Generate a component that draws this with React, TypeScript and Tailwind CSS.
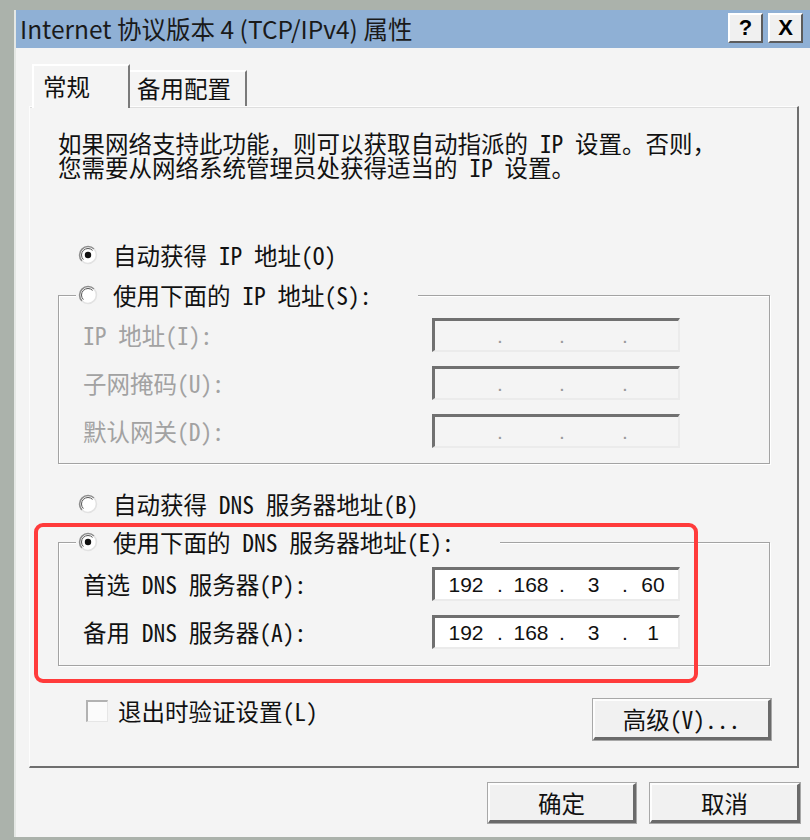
import React from 'react';

const SONG = "font-['Noto_Sans_Mono_CJK_SC','Noto_Sans_CJK_SC',sans-serif]";

function Radio({ checked = false }: { checked?: boolean }) {
  return (
    <svg width="20" height="20" viewBox="0 0 20 20" className="shrink-0">
      <circle cx="10" cy="10" r="8.5" fill="#fff" />
      <path d="M3.99 16.01A8.5 8.5 0 0 1 16.01 3.99" fill="none" stroke="#8c8c8c" strokeWidth="1.6" />
      <path d="M16.01 3.99A8.5 8.5 0 0 1 3.99 16.01" fill="none" stroke="#e2e2e2" strokeWidth="1.6" />
      <path d="M5.4 14.6A6.5 6.5 0 0 1 14.6 5.4" fill="none" stroke="#555" strokeWidth="1" />
      {checked && <circle cx="10" cy="10" r="3.2" fill="#111" />}
    </svg>
  );
}

function RadioRow({ checked, children }: { checked?: boolean; children: React.ReactNode }) {
  return (
    <div className="flex h-[24px] items-center gap-[15px]">
      <Radio checked={checked} />
      <span className={`${SONG} whitespace-pre text-[23.5px] leading-[24px] text-[#111]`}>{children}</span>
    </div>
  );
}

function IpBox({ parts, disabled }: { parts?: string[]; disabled?: boolean }) {
  const p = parts ?? ['', '', '', ''];
  const dot = disabled ? 'text-[#9a9a9a]' : 'text-[#111]';
  return (
    <div
      className={`flex h-[34px] w-[248px] items-center border-t-[3px] border-l-[3px] border-r-2 border-b-2 border-t-[#707070] border-l-[#707070] border-r-[#ebebeb] border-b-[#ebebeb] font-['Liberation_Sans',sans-serif] text-[21px] text-[#111] ${
        disabled ? 'bg-[#f4f4f4]' : 'bg-white'
      }`}
    >
      <span className="w-[62px] text-center">{p[0]}</span>
      <span className={`w-[6px] text-center ${dot}`}>.</span>
      <span className="w-[56px] text-center">{p[1]}</span>
      <span className={`w-[6px] text-center ${dot}`}>.</span>
      <span className="w-[57px] text-center">{p[2]}</span>
      <span className={`w-[6px] text-center ${dot}`}>.</span>
      <span className="flex-1 text-center">{p[3]}</span>
    </div>
  );
}

function FieldRow({ label, disabled, parts }: { label: string; disabled?: boolean; parts?: string[] }) {
  return (
    <div className="flex h-[34px] items-center">
      <span
        className={`ml-[24px] w-[349px] whitespace-pre ${SONG} text-[23.5px] leading-[24px] ${
          disabled ? 'text-[#a2a2a2]' : 'text-[#111]'
        }`}
      >
        {label}
      </span>
      <IpBox disabled={disabled} parts={parts} />
    </div>
  );
}

function Group({ legend, checked, children }: { legend: string; checked?: boolean; children: React.ReactNode }) {
  return (
    <fieldset className="ml-[28px] w-[712px] border border-[#a3a3a3] shadow-[inset_1px_1px_0_#fff,1px_1px_0_#fff]">
      <legend className="ml-[17px] bg-[#f4f4f4] pl-[2px] pr-[46px]">
        <RadioRow checked={checked}>{legend}</RadioRow>
      </legend>
      {children}
    </fieldset>
  );
}

function CapButton({ children }: { children: React.ReactNode }) {
  return (
    <div className="flex h-[30px] w-[35px] items-center justify-center border-t-2 border-l-2 border-r-2 border-b-2 border-t-white border-l-white border-r-[#5c5c5c] border-b-[#5c5c5c] bg-[#f0f0f0] font-['Liberation_Sans',sans-serif] text-[22px] font-bold leading-none text-black">
      {children}
    </div>
  );
}

function PushButton({ className, children }: { className: string; children: React.ReactNode }) {
  return (
    <div
      className={`flex items-center justify-center border-t-2 border-l-2 border-r-[3px] border-b-[3px] border-t-[#fdfdfd] border-l-[#fdfdfd] border-r-[#6a6a6a] border-b-[#6a6a6a] bg-[#f1f1f1] shadow-[0_0_0_1px_#a8a8a8] ${SONG} text-[23.5px] leading-[24px] text-[#111] ${className}`}
    >
      {children}
    </div>
  );
}

export default function App() {
  return (
    <div className="relative flex h-[840px] w-[810px] flex-col overflow-hidden bg-[#abb2ab]">
      <div className="h-[10px] shrink-0" />
      <div className="flex h-[827px] shrink-0">
        <div className="w-[14px] shrink-0" />
        <div className="w-[2px] shrink-0 bg-[#e4e7e4]" />
        <div className="flex flex-1 flex-col">
          {/* title bar */}
          <div className="flex h-[38px] shrink-0 items-start justify-between bg-[#8fb0d5] pt-[3px] pr-[7px]">
            <span className="pl-[4px] pt-[2px] font-['Noto_Sans_CJK_SC',sans-serif] text-[24.5px] leading-[28px] text-[#1a1a1a]">
              Internet 协议版本 4 (TCP/IPv4) 属性
            </span>
            <div className="flex gap-[5px]">
              <CapButton>?</CapButton>
              <CapButton>X</CapButton>
            </div>
          </div>

          {/* body */}
          <div className="flex flex-1 flex-col bg-[#f4f4f4]">
            <div className="flex h-[58px] shrink-0 items-end pl-[16px]">
              <div
                className={`relative z-10 -mb-[2px] flex h-[44px] w-[98px] items-center border-t-2 border-l-2 border-r-2 border-t-white border-l-white border-r-[#7a7a7a] bg-[#f4f4f4] pl-[9px] ${SONG} text-[23.5px] text-[#111]`}
              >
                常规
              </div>
              <div
                className={`flex h-[36px] w-[117px] items-center border-t-2 border-r-2 border-t-white border-r-[#7a7a7a] pl-[7px] ${SONG} text-[23.5px] text-[#111]`}
              >
                备用配置
              </div>
            </div>

            {/* tab panel */}
            <div className="ml-[13px] flex h-[662px] w-[770px] shrink-0 flex-col border-t border-l border-r-2 border-b-2 border-t-[#fdfdfd] border-l-[#fdfdfd] border-r-[#6e6e6e] border-b-[#6e6e6e] shadow-[inset_0_1px_0_#dedede]">
              <div className={`mt-[24px] ml-[28px] whitespace-pre ${SONG} text-[23.5px] leading-[24px] text-[#111]`}>
                <div>如果网络支持此功能，则可以获取自动指派的 IP 设置。否则，</div>
                <div>您需要从网络系统管理员处获得适当的 IP 设置。</div>
              </div>

              <div className="mt-[64px] ml-[48px]">
                <RadioRow checked>自动获得 IP 地址(O)</RadioRow>
              </div>

              <div className="mt-[16px]">
                <Group legend="使用下面的 IP 地址(S):">
                  <div className="flex flex-col gap-[14px] pt-[11px] pb-[15px]">
                    <FieldRow label="IP 地址(I):" disabled />
                    <FieldRow label="子网掩码(U):" disabled />
                    <FieldRow label="默认网关(D):" disabled />
                  </div>
                </Group>
              </div>

              <div className="mt-[28px] ml-[48px]">
                <RadioRow>自动获得 DNS 服务器地址(B)</RadioRow>
              </div>

              <div className="mt-[14px]">
                <Group legend="使用下面的 DNS 服务器地址(E):" checked>
                  <div className="flex flex-col gap-[14px] pt-[13px] pb-[16px]">
                    <FieldRow label="首选 DNS 服务器(P):" parts={['192', '168', '3', '60']} />
                    <FieldRow label="备用 DNS 服务器(A):" parts={['192', '168', '3', '1']} />
                  </div>
                </Group>
              </div>

              <div className="mt-[33px] flex items-start justify-between pr-[26px]">
                <div className="ml-[56px] flex h-[24px] items-center gap-[10px]">
                  <div className="h-[22px] w-[22px] border-t-2 border-l-2 border-r border-b border-t-[#b2b2b2] border-l-[#b2b2b2] border-r-[#e6e6e6] border-b-[#e6e6e6] bg-[#fbfbfb]" />
                  <span className={`${SONG} text-[23.5px] leading-[24px] text-[#111]`}>退出时验证设置(L)</span>
                </div>
                <PushButton className="h-[41px] w-[178px]">高级(V)...</PushButton>
              </div>
            </div>

            <div className="mt-[15px] flex justify-end gap-[14px] pr-[10px]">
              <PushButton className="h-[40px] w-[148px]">确定</PushButton>
              <PushButton className="h-[40px] w-[150px]">取消</PushButton>
            </div>
          </div>
        </div>
      </div>

      {/* red annotation box */}
      <div className="pointer-events-none absolute top-[523px] left-[34px] h-[160px] w-[664px] rounded-[9px] border-4 border-[#ff3b3b]" />
    </div>
  );
}
